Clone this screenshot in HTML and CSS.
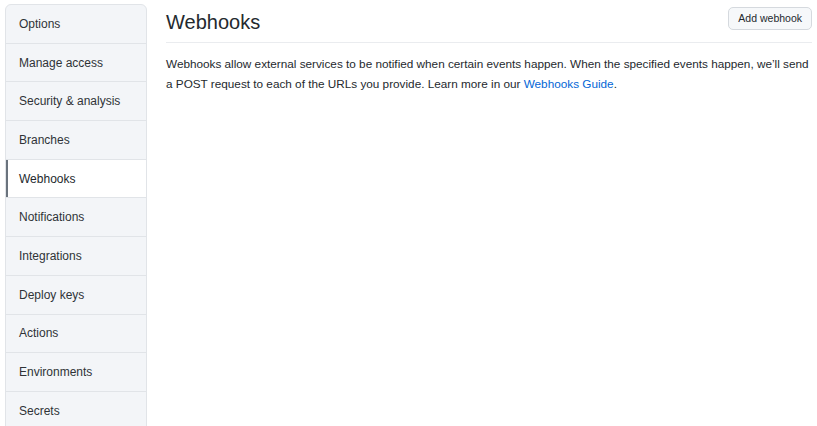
FILE: index.html
```html
<!DOCTYPE html>
<html>
<head>
<meta charset="utf-8">
<link rel="stylesheet" href="styles.css">
</head>
<body>
<div class="layout">
  <nav class="menu">
    <a class="menu-item">Options</a>
    <a class="menu-item">Manage access</a>
    <a class="menu-item">Security &amp; analysis</a>
    <a class="menu-item">Branches</a>
    <a class="menu-item selected">Webhooks</a>
    <a class="menu-item">Notifications</a>
    <a class="menu-item">Integrations</a>
    <a class="menu-item">Deploy keys</a>
    <a class="menu-item">Actions</a>
    <a class="menu-item">Environments</a>
    <a class="menu-item">Secrets</a>
  </nav>
  <main class="content">
    <div class="subhead">
      <h2 class="subhead-heading">Webhooks</h2>
      <button class="btn">Add webhook</button>
    </div>
    <p class="desc">Webhooks allow external services to be notified when certain events happen. When the specified events happen, we’ll send a POST request to each of the URLs you provide. Learn more in our <a class="link">Webhooks Guide</a>.</p>
  </main>
</div>
</body>
</html>
```
FILE: styles.css
```css
html, body {
  margin: 0;
  padding: 0;
  background: #ffffff;
  font-family: "Liberation Sans", Arial, sans-serif;
  color: #24292e;
  overflow: hidden;
}
.layout {
  display: flex;
  gap: 19px;
  padding: 4px 5px 0 5px;
}
.menu {
  width: 140px;
  flex: none;
  display: flex;
  flex-direction: column;
  border: 1px solid #e1e4e8;
  border-radius: 6px;
  background: #f3f5f8;
  overflow: hidden;
}
.menu-item {
  box-sizing: border-box;
  height: 38.7px;
  display: flex;
  align-items: center;
  padding-left: 13px;
  font-size: 12px;
  color: #2f3337;
  border-bottom: 1px solid #e1e4e8;
  position: relative;
}
.menu-item.selected {
  background: #ffffff;
  color: #24292e;
}
.menu-item.selected::before {
  content: "";
  position: absolute;
  left: 0;
  top: 0;
  bottom: 0;
  width: 2px;
  background: #6a737d;
}
.content {
  flex: 1;
  min-width: 0;
}
.subhead {
  display: flex;
  align-items: center;
  justify-content: space-between;
  height: 38px;
  border-bottom: 1px solid #eaecef;
}
.subhead-heading {
  margin: 0;
  font-size: 20px;
  font-weight: 400;
  color: #24292e;
  padding-bottom: 2px;
}
.btn {
  font-family: inherit;
  font-size: 10.5px;
  color: #24292e;
  background: #f6f8fa;
  border: 1px solid #d5d9de;
  border-radius: 5px;
  height: 23px;
  padding: 0 9px;
  margin-bottom: 10px;
}
.desc {
  margin: 11px 0 0 0;
  font-size: 11.75px;
  line-height: 20px;
  color: #24292e;
}
.link {
  color: #0366d6;
}
```
